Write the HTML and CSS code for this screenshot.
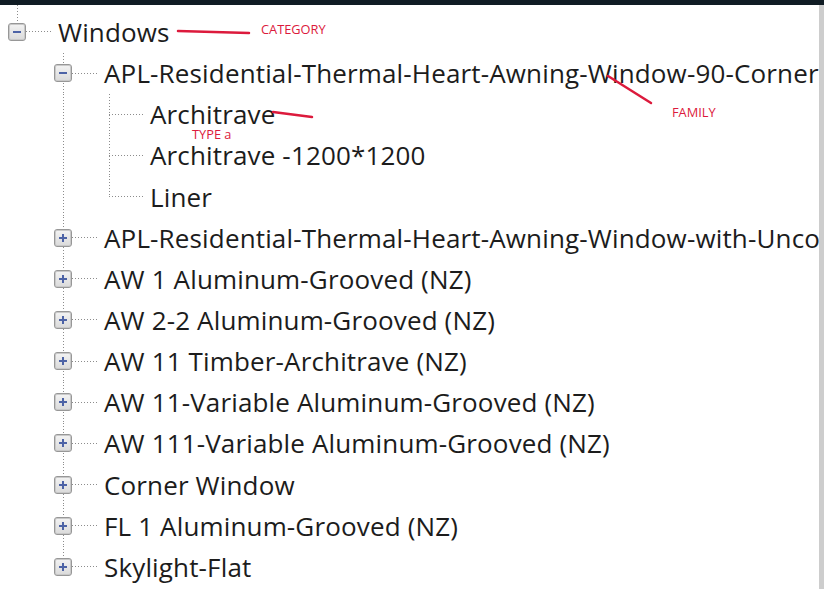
FILE: index.html
```html
<!DOCTYPE html>
<html>
<head>
<meta charset="utf-8">
<link rel="stylesheet" href="styles.css">
</head>
<body>
<div class="screen">
  <div class="topbar"></div>
  <div class="main">
    <div class="tree">
      <div class="row">
        <span class="conn"><span class="box"></span></span>
        <span class="label">Windows</span>
      </div>
      <div class="row">
        <span class="indent"></span>
        <span class="conn tee"><span class="box"></span></span>
        <span class="label">APL-Residential-Thermal-Heart-Awning-Window-90-Corner-Window</span>
      </div>
      <div class="row">
        <span class="indent"></span><span class="indent pipe"></span>
        <span class="conn tee"></span>
        <span class="label">Architrave</span>
      </div>
      <div class="row">
        <span class="indent"></span><span class="indent pipe"></span>
        <span class="conn tee"></span>
        <span class="label">Architrave -1200*1200</span>
      </div>
      <div class="row">
        <span class="indent"></span><span class="indent pipe"></span>
        <span class="conn"></span>
        <span class="label">Liner</span>
      </div>
      <div class="row">
        <span class="indent"></span>
        <span class="conn tee"><span class="box plus"></span></span>
        <span class="label">APL-Residential-Thermal-Heart-Awning-Window-with-Uncoupled-Sash</span>
      </div>
      <div class="row">
        <span class="indent"></span>
        <span class="conn tee"><span class="box plus"></span></span>
        <span class="label">AW 1 Aluminum-Grooved (NZ)</span>
      </div>
      <div class="row">
        <span class="indent"></span>
        <span class="conn tee"><span class="box plus"></span></span>
        <span class="label">AW 2-2 Aluminum-Grooved (NZ)</span>
      </div>
      <div class="row">
        <span class="indent"></span>
        <span class="conn tee"><span class="box plus"></span></span>
        <span class="label">AW 11 Timber-Architrave (NZ)</span>
      </div>
      <div class="row">
        <span class="indent"></span>
        <span class="conn tee"><span class="box plus"></span></span>
        <span class="label">AW 11-Variable Aluminum-Grooved (NZ)</span>
      </div>
      <div class="row">
        <span class="indent"></span>
        <span class="conn tee"><span class="box plus"></span></span>
        <span class="label">AW 111-Variable Aluminum-Grooved (NZ)</span>
      </div>
      <div class="row">
        <span class="indent"></span>
        <span class="conn tee"><span class="box plus"></span></span>
        <span class="label">Corner Window</span>
      </div>
      <div class="row">
        <span class="indent"></span>
        <span class="conn tee"><span class="box plus"></span></span>
        <span class="label">FL 1 Aluminum-Grooved (NZ)</span>
      </div>
      <div class="row">
        <span class="indent"></span>
        <span class="conn"><span class="box plus"></span></span>
        <span class="label">Skylight-Flat</span>
      </div>
    </div>
    <div class="scrollstrip"></div>
  </div>
  <svg class="annot" width="824" height="589" viewBox="0 0 824 589">
    <g class="marks">
      <line x1="178" y1="31" x2="249" y2="33"/>
      <line x1="273" y1="112" x2="312" y2="117"/>
      <line x1="608" y1="76" x2="651" y2="103"/>
    </g>
    <text class="note" x="261" y="34">CATEGORY</text>
    <text class="note" x="192" y="139">TYPE a</text>
    <text class="note" x="672" y="117">FAMILY</text>
  </svg>
</div>
</body>
</html>
```

FILE: styles.css
```css
html, body {
  margin: 0;
  padding: 0;
  background: #ffffff;
}

.screen {
  position: relative;
  width: 824px;
  height: 589px;
  overflow: hidden;
  display: flex;
  flex-direction: column;
  background: #ffffff;
}

.topbar {
  height: 5px;
  flex: none;
  background: #101c24;
}

.main {
  flex: 1;
  display: flex;
  min-height: 0;
}

.tree {
  flex: 1;
  min-width: 0;
  overflow: hidden;
  padding-top: 6.4px;
  background-image: repeating-linear-gradient(to bottom, #8c8c8c 0 1px, transparent 1px 3px);
  background-size: 1px 7px;
  background-position: 17px 0;
  background-repeat: no-repeat;
}

.scrollstrip {
  width: 5px;
  flex: none;
  background: #cdcdcd;
}

.row {
  display: flex;
  align-items: stretch;
  height: 41.15px;
  white-space: nowrap;
}

.indent {
  flex: none;
  width: 46px;
}

.indent.pipe {
  background-image: repeating-linear-gradient(to bottom, #8c8c8c 0 1px, transparent 1px 3px);
  background-size: 1px 100%;
  background-position: 17px 0;
  background-repeat: no-repeat;
}

.conn {
  flex: none;
  width: 52px;
  display: flex;
  align-items: center;
  background-image:
    repeating-linear-gradient(to right, #8c8c8c 0 1px, transparent 1px 3px),
    repeating-linear-gradient(to bottom, #8c8c8c 0 1px, transparent 1px 3px);
  background-size: 35px 1px, 1px 50%;
  background-position: 17px 50%, 17px 0;
  background-repeat: no-repeat;
}

.conn.tee {
  background-size: 35px 1px, 1px 100%;
}

.box {
  box-sizing: border-box;
  width: 18px;
  height: 18px;
  margin-left: 8px;
  border: 1px solid #979797;
  border-radius: 3px;
  background: linear-gradient(#f3f3f3, #dadada);
  box-shadow: inset 0 0 0 1px #c9c9c9;
  display: grid;
  place-items: center;
}

.box::before {
  content: "";
  grid-area: 1 / 1;
  width: 8px;
  height: 2px;
  background: #4d63a6;
}

.box.plus::after {
  content: "";
  grid-area: 1 / 1;
  width: 2px;
  height: 8px;
  background: #4d63a6;
}

.label {
  margin-left: 6px;
  display: flex;
  align-items: center;
  font-family: "Open Sans", "Noto Sans", sans-serif;
  font-size: 26px;
  letter-spacing: 0.15px;
  color: #1c1c1c;
}

.annot {
  position: absolute;
  left: 0;
  top: 0;
  pointer-events: none;
}

.marks line {
  stroke: #dc1a3c;
  stroke-width: 2.5;
  stroke-linecap: round;
}

.note {
  fill: #dc1a3c;
  font-family: "Open Sans", "Noto Sans", sans-serif;
  font-size: 12.8px;
}
```
